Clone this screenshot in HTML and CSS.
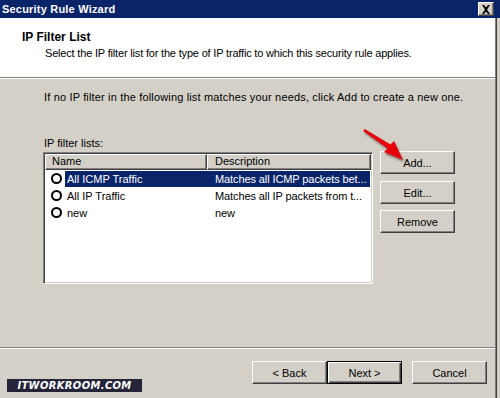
FILE: index.html
```html
<!DOCTYPE html>
<html>
<head>
<meta charset="utf-8">
<link rel="stylesheet" href="styles.css">
</head>
<body>
<div class="screen">
  <div class="titlebar">
    <span class="title">Security Rule Wizard</span>
    <span class="close"><svg width="10" height="9" viewBox="0 0 10 9"><path d="M1 0h2l2 2.5L7 0h2L6 4.5 9 9H7L5 6.5 3 9H1l3-4.5z" fill="#000"/></svg></span>
  </div>
  <div class="dialog">
    <div class="header">
      <div class="h-title">IP Filter List</div>
      <div class="h-sub">Select the IP filter list for the type of IP traffic to which this security rule applies.</div>
    </div>
    <div class="sep"></div>
    <div class="body">
      <p class="intro">If no IP filter in the following list matches your needs, click Add to create a new one.</p>
      <p class="label">IP filter lists:</p>
      <div class="list-row">
        <div class="listbox">
          <div class="lv-head">
            <div class="col col-name">Name</div>
            <div class="col col-desc">Description</div>
          </div>
          <div class="lv-item selected">
            <span class="radio"></span>
            <span class="cell-name">All ICMP Traffic</span>
            <span class="cell-desc">Matches all ICMP packets bet...</span>
          </div>
          <div class="lv-item">
            <span class="radio"></span>
            <span class="cell-name">All IP Traffic</span>
            <span class="cell-desc">Matches all IP packets from t...</span>
          </div>
          <div class="lv-item">
            <span class="radio"></span>
            <span class="cell-name">new</span>
            <span class="cell-desc">new</span>
          </div>
        </div>
        <div class="side-buttons">
          <button class="btn">Add...</button>
          <button class="btn">Edit...</button>
          <button class="btn">Remove</button>
        </div>
      </div>
    </div>
    <div class="sep"></div>
    <div class="footer">
      <button class="btn">&lt; Back</button>
      <button class="btn default">Next &gt;</button>
      <button class="btn cancel">Cancel</button>
    </div>
  </div>
  <svg class="arrow" width="50" height="44" viewBox="0 0 50 44">
    <polygon points="5.3,7 6.7,5 32.5,20.5 36,17 45,36 26,28 29.5,24.5" fill="#e8000a"/>
  </svg>
  <div class="watermark">ITWORKROOM.COM</div>
</div>
</body>
</html>
```
FILE: styles.css
```css
* { box-sizing: border-box; }
html, body { margin: 0; padding: 0; }
body {
  width: 500px;
  height: 398px;
  overflow: hidden;
  background: #d4d0c8;
  font-family: "Liberation Sans", Arial, sans-serif;
  font-size: 11px;
  color: #000;
}
.screen {
  position: relative;
  width: 500px;
  height: 398px;
}
.titlebar {
  height: 18px;
  background: #0a246a;
  display: flex;
  align-items: center;
  justify-content: space-between;
  padding: 0 6px 0 2px;
}
.title {
  color: #fff;
  font-weight: bold;
  font-size: 11px;
  letter-spacing: 0.2px;
}
.close {
  width: 16px;
  height: 14px;
  background: #d4d0c8;
  border: 1px solid;
  border-color: #fff #404040 #404040 #fff;
  box-shadow: inset -1px -1px #808080;
  display: flex;
  align-items: center;
  justify-content: center;
}
.dialog {
  width: 496px;
  height: 380px;
  border-right: 1px solid #808080;
  display: flex;
  flex-direction: column;
  position: relative;
}
.dialog::after {
  content: "";
  position: absolute;
  right: -2px;
  top: 0;
  bottom: 0;
  width: 1px;
  background: #404040;
}
.header {
  background: #fff;
  height: 59px;
  padding: 13px 0 0 22px;
}
.h-title {
  font-weight: bold;
  font-size: 12px;
  line-height: 13px;
}
.h-sub {
  margin: 3px 0 0 23px;
  line-height: 13px;
  white-space: nowrap;
  letter-spacing: -0.18px;
}
.sep {
  height: 2px;
  border-top: 1px solid #808080;
  border-bottom: 1px solid #fff;
}
.body {
  padding: 12px 0 0 43px;
  height: 268px;
}
.intro {
  margin: 0 0 0 1px;
  line-height: 13px;
  white-space: nowrap;
  letter-spacing: 0.16px;
}
.label {
  margin: 33px 0 0 1px;
  line-height: 13px;
}
.list-row {
  display: flex;
  align-items: flex-start;
  margin-top: 2px;
}
.listbox {
  width: 330px;
  height: 132px;
  background: #fff;
  border: 1px solid;
  border-color: #808080 #fff #fff #808080;
  box-shadow: inset 1px 1px #404040, inset -1px -1px #d4d0c8;
  padding: 1px;
}
.lv-head {
  display: flex;
  height: 16px;
}
.col {
  background: #d4d0c8;
  border: 1px solid;
  border-color: #fff #404040 #404040 #fff;
  box-shadow: inset -1px -1px #808080;
  line-height: 13px;
  padding-left: 6px;
  white-space: nowrap;
}
.col-name { width: 162px; }
.col-desc { width: 164px; padding-left: 7px; }
.lv-item {
  display: flex;
  align-items: center;
  height: 17px;
  padding-left: 6px;
  white-space: nowrap;
}
.radio {
  width: 11px;
  height: 11px;
  border: 2px solid #000;
  border-radius: 50%;
  background: #fff;
  flex: none;
}
.cell-name {
  width: 142px;
  flex: none;
  padding-left: 2px;
  margin-left: 3px;
  line-height: 16px;
  overflow: hidden;
}
.cell-desc {
  width: 163px;
  flex: none;
  padding-left: 8px;
  line-height: 16px;
  overflow: hidden;
  letter-spacing: -0.1px;
}
.lv-item.selected .cell-name,
.lv-item.selected .cell-desc {
  background: #0a246a;
  color: #fff;
}
.side-buttons {
  display: flex;
  flex-direction: column;
  gap: 7px;
  margin-left: 7px;
  margin-top: -1px;
}
.side-buttons .btn:nth-child(3) { margin-top: -1px; }
.btn {
  width: 75px;
  height: 23px;
  background: #d4d0c8;
  border: 1px solid;
  border-color: #fff #404040 #404040 #fff;
  box-shadow: inset -1px -1px #808080;
  font-family: "Liberation Sans", Arial, sans-serif;
  font-size: 11px;
  color: #000;
  padding: 0;
}
.btn.default {
  border: 1px solid #000;
  box-shadow: inset 1px 1px #fff, inset -1px -1px #404040, inset -2px -2px #808080;
}
.footer {
  display: flex;
  padding: 12px 0 0 252px;
}
.footer .cancel { margin-left: 10px; }
.arrow {
  position: absolute;
  left: 358px;
  top: 124px;
  filter: drop-shadow(1px 2px 1px rgba(0,0,0,0.45));
}
.watermark {
  position: absolute;
  left: 7px;
  top: 379px;
  width: 135px;
  height: 13px;
  background: #25253a;
  color: #fff;
  font-family: "DejaVu Sans Condensed", "DejaVu Sans", sans-serif;
  font-weight: bold;
  font-style: italic;
  font-size: 11px;
  line-height: 13px;
  text-align: center;
  letter-spacing: 0.4px;
}
```
